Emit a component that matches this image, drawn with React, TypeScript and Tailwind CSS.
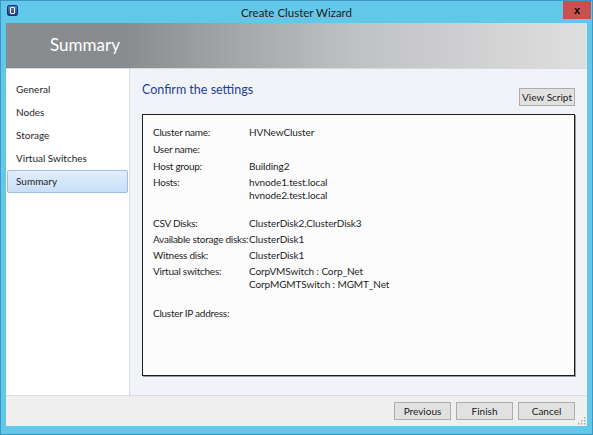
import React from 'react';

const font = { fontFamily: 'Lato, "Open Sans", Arial, sans-serif' };

const steps = ['General', 'Nodes', 'Storage', 'Virtual Switches', 'Summary'];

const settings: { label: string; value: string[]; mt: string }[] = [
  { label: 'Cluster name:', value: ['HVNewCluster'], mt: 'mt-0' },
  { label: 'User name:', value: [], mt: 'mt-[4px]' },
  { label: 'Host group:', value: ['Building2'], mt: 'mt-[4px]' },
  { label: 'Hosts:', value: ['hvnode1.test.local', 'hvnode2.test.local'], mt: 'mt-[3px]' },
  { label: 'CSV Disks:', value: ['ClusterDisk2,ClusterDisk3'], mt: 'mt-[15px]' },
  { label: 'Available storage disks:', value: ['ClusterDisk1'], mt: 'mt-[3px]' },
  { label: 'Witness disk:', value: ['ClusterDisk1'], mt: 'mt-[3px]' },
  { label: 'Virtual switches:', value: ['CorpVMSwitch : Corp_Net', 'CorpMGMTSwitch : MGMT_Net'], mt: 'mt-[3px]' },
  { label: 'Cluster IP address:', value: [], mt: 'mt-[16px]' },
];

function WizardButton({ label, className = '' }: { label: string; className?: string }) {
  return (
    <button
      className={`h-[18px] flex items-center justify-center whitespace-nowrap bg-[#e1e1e1] border border-[#adadad] text-[10px] text-[#1b1b1b] leading-none ${className}`}
    >
      {label}
    </button>
  );
}

export default function App() {
  return (
    <div
      style={font}
      className="relative w-[593px] h-[435px] bg-[#62c8ea] border border-[#3f97bf] flex flex-col overflow-hidden"
    >
      {/* Title bar */}
      <div className="h-[22px] shrink-0 flex items-center justify-center relative">
        <div className="absolute left-[6px] top-[4px] w-[11px] h-[11px] rounded-[2px] bg-gradient-to-b from-[#5b76c8] to-[#243f92] border border-[#1c3278] flex items-center justify-center">
          <div className="w-[5px] h-[7px] border border-white rounded-[1px]" />
        </div>
        <span className="text-[11.5px] text-[#1a1a1a] mt-[1px]">Create Cluster Wizard</span>
      </div>
      <div className="absolute left-[562px] top-0 w-[28px] h-[18px] bg-[#c75050] flex items-center justify-center">
        <span className="text-[11px] font-bold text-black leading-none" style={{ fontFamily: 'Arial, sans-serif' }}>x</span>
      </div>

      {/* Window body */}
      <div className="mx-[5px] flex-1 flex flex-col">
        {/* Banner */}
        <div className="h-[46px] shrink-0 bg-[linear-gradient(to_right,#898c8f_20%,#c0c1c3_60%,#dfdfe0_100%)] flex items-center pl-[44px] border-b border-[#d8d8d8]">
          <span className="text-[17px] text-white mb-[1px]">Summary</span>
        </div>

        <div className="flex-1 flex min-h-0">
          {/* Steps */}
          <div className="w-[124px] shrink-0 bg-white border-r border-[#dadada] pt-[9px] pl-[1px] pr-[1px] flex flex-col">
            {steps.map((s) => (
              <div
                key={s}
                className={`h-[23px] flex items-center text-[10px] text-[#1e1e1e] ${
                  s === 'Summary'
                    ? 'bg-gradient-to-b from-[#e1eefc] to-[#c9def7] border border-[#9dbde3] rounded-[2px] pl-[8px]'
                    : 'pl-[9px]'
                }`}
              >
                {s}
              </div>
            ))}
          </div>

          {/* Content */}
          <div className="flex-1 bg-[#f0f4f9] pt-[12px] px-[12px] pb-[19px] flex flex-col">
            <div className="h-[33px] shrink-0 flex justify-between items-start">
              <span className="text-[12.5px] leading-[18px] text-[#1f3d98]">Confirm the settings</span>
              <WizardButton label="View Script" className="w-[56px] mt-[7px]" />
            </div>
            <div className="flex-1 bg-[#fcfcfc] border border-[#1e1e1e] shadow-[1px_1px_0_#9a9a9a] pt-[11px] pl-[10px]">
              {settings.map((r) => (
                <div key={r.label} className={`flex text-[10px] leading-[13px] tracking-[-0.1px] text-[#1e1e1e] ${r.mt}`}>
                  <div className="w-[96px] shrink-0 whitespace-nowrap tracking-[-0.25px]">{r.label}</div>
                  <div className="flex flex-col">
                    {r.value.map((v) => (
                      <span key={v}>{v}</span>
                    ))}
                  </div>
                </div>
              ))}
            </div>
          </div>
        </div>

        {/* Footer */}
        <div className="h-[31px] shrink-0 bg-[#efefef] border-t border-[#dcdcdc] flex items-center justify-end gap-[5px] pr-[12px] pb-[1px] relative">
          <WizardButton label="Previous" className="w-[57px]" />
          <WizardButton label="Finish" className="w-[57px]" />
          <WizardButton label="Cancel" className="w-[57px]" />
          <svg className="absolute right-[1px] bottom-[1px]" width="9" height="9" viewBox="0 0 9 9">
            {[
              [7, 1], [7, 4], [4, 4], [7, 7], [4, 7], [1, 7],
            ].map(([x, y]) => (
              <rect key={`${x}-${y}`} x={x} y={y} width="1.5" height="1.5" fill="#a9a9a9" />
            ))}
          </svg>
        </div>
      </div>
      <div className="h-[8px] shrink-0" />
    </div>
  );
}
